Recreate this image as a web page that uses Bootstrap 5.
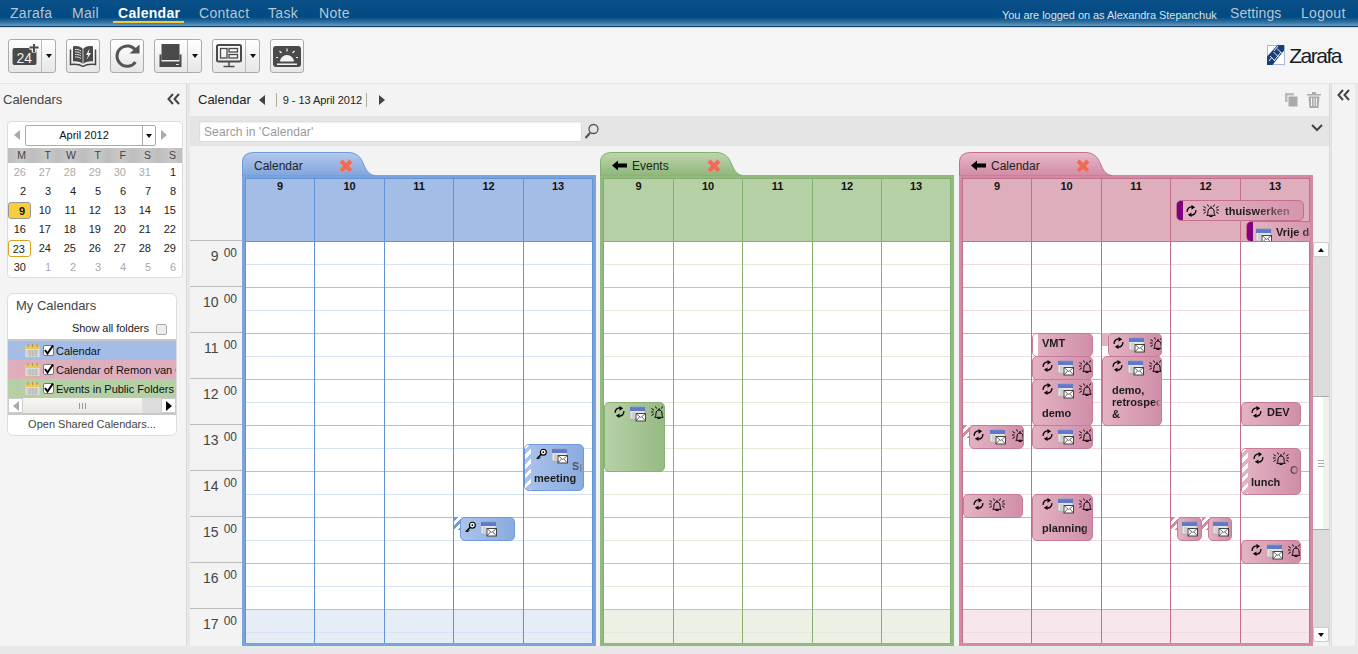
<!DOCTYPE html>
<html lang="en">
<head>
<meta charset="utf-8">
<title>Zarafa Calendar</title>
<link href="https://cdn.jsdelivr.net/npm/bootstrap@5.3.0/dist/css/bootstrap.min.css" rel="stylesheet">
<style>
html,body{height:654px;overflow:hidden}
body{font-family:"Liberation Sans",Arial,sans-serif;font-size:11px;line-height:12px;color:#222;background:#e8e8e8;width:1358px}
svg{display:block;flex:none}
.z-top{height:28px;background:linear-gradient(#0b5089 0,#014a82 17px,#2f70a0 22px,#6a9abd 26px,#0b3d66 26px,#0b3d66 27px,#dcdcdc 27px);color:#b9c7d3;font-size:14px;letter-spacing:.3px;position:relative}
.z-top a{color:#b9c7d3;text-decoration:none;position:absolute;top:5px;line-height:16px}
.z-top a.on{color:#fff;font-weight:700;letter-spacing:.3px}
.z-top .on::after{content:"";position:absolute;left:-5px;right:-4px;top:16px;height:2px;background:#f5c92f}
.z-top .z-set{letter-spacing:.1px}
.z-user{position:absolute;left:1002px;top:8px;font-size:11px;color:#d8e4ee;letter-spacing:-.05px;line-height:14px}
.z-bar{height:56px;background:#f5f5f5;padding:11px 8px 0;gap:10px;border-bottom:1px solid #e4e4e4}
.z-btn{height:34px;border:1px solid #ababab;border-radius:3px;background:linear-gradient(#fff,#e6e6e6);padding:0;display:flex;align-items:center;justify-content:center;width:34px}
.z-btn.z-wide{width:48px;justify-content:flex-start}
.z-main-ic{width:33px;height:32px;display:flex;align-items:center;justify-content:center;border-right:1px solid #bbb}
.z-drop{flex:1;display:flex;justify-content:center}
.z-caret{width:0;height:0;border:3.5px solid transparent;border-top:4px solid #111;border-bottom:0}
.z-logo{margin-left:auto;margin-right:9px;margin-top:6px;gap:4px}
.z-logo span{font-size:21px;letter-spacing:-1.5px;color:#151c26;line-height:22px}
.z-body{height:562px}
.z-left{width:186px;background:#f4f4f4;margin-right:4px;box-shadow:1px 0 0 #d8d8d8}
.z-lhead{height:37px;padding:9px 6px 0 3px;font-size:13px;color:#444;line-height:14px}
.mini{margin:0 0 0 7px;width:176px;height:157px;border:1px solid #ddd;border-radius:4px;background:#fff;overflow:hidden}
.mini-sel{height:26px;padding:3px 6px 0 6px}
.mini-box{width:131px;height:21px;margin:0 5px;border:1px solid #aaa;border-radius:2px;display:flex;font-size:11px;line-height:19px}
.mini-box b{flex:1;font-weight:400;text-align:center;color:#111}
.mini-box i{width:13px;border-left:1px solid #aaa;display:flex;align-items:center;justify-content:center}
.tri-l,.tri-r{width:0;height:0;border:5px solid transparent;border-left:0;border-right:6px solid #aaa}
.tri-r{border-right:0;border-left:6px solid #aaa}
.tri-m{margin-top:5px}
.tri-d{border-right-color:#444}.tri-e{border-left-color:#444}.tri-k{border-left-color:#000}
.mini-dow,.mini-days{display:grid;grid-template-columns:repeat(7,25px)}
.mini-dow{height:15px;background:repeating-linear-gradient(90deg,#bdbdbd 0,#c9c9c9 13px,#bdbdbd 25px);color:#444;line-height:15px;text-align:right;font-size:10.5px}
.mini-dow span{padding-right:7px}
.mini-days span{height:19px;line-height:18px;text-align:right;padding-right:7px;color:#222}
.mini-days .off{color:#aaa}
.mini-days .sel{margin-right:2px;padding-right:5px;height:17px;line-height:16px;margin-top:1px;background:#f8cd3e;border:1px solid #999;border-radius:3px;font-weight:700;color:#111}
.mini-days .now{margin-right:2px;padding-right:5px;height:17px;line-height:16px;margin-top:1px;border:1px solid #d9a520;border-radius:3px}
.mycal{margin:15px 0 0 7px;width:170px;height:143px;border:1px solid #ddd;border-radius:6px;background:#fff;overflow:hidden}
.mycal-t{font-size:13px;color:#444;padding:5px 0 0 8px;line-height:14px;height:24px}
.mycal-s{height:23px;border-bottom:2px solid #c8c8c8;padding-left:64px;gap:7px;align-items:flex-start;color:#222;line-height:14px;letter-spacing:-.05px}
.mycal-s span{padding-top:3px}
.mycal-s .form-check-input{width:11px;height:11px;margin:6px 0 0;background:#eee;border-color:#aaa;border-radius:2px}
.tree{height:19px;padding-left:9px;white-space:nowrap;overflow:hidden;line-height:18px;color:#111;align-items:center}
.tree-b{background:#a3bde6}.tree-p{background:#dfaebd}.tree-g{background:#b5d0a5}
.tree-d{width:8px;height:19px;flex:none;border-left:1px dotted #bbb;position:relative}
.tree-d::after{content:"";position:absolute;left:0;right:0;top:9px;border-top:1px dotted #bbb}
.tree-c{margin:0 2px 0 3px}
.hbar{height:15px;background:#f3f2ee}
.hbar i{display:flex;align-items:center;justify-content:center;width:15px;height:15px;background:#fff;border:1px solid #ccc;flex:none}
.hbar u{display:flex;flex:1;align-items:center;justify-content:center;background:linear-gradient(#f7f6f2,#e9e8e4)}
.hbar u::before{content:"";width:7px;height:6px;background:repeating-linear-gradient(90deg,#999 0 1px,transparent 1px 3px)}
.hbar s{display:block;width:19px;background:#dcdcdc}
.mycal-o{border-top:2px solid #c8c8c8;height:22px;text-align:center;line-height:19px;color:#444}
.z-main{width:1139px;background:#f3f3f3;box-shadow:1px 0 0 #d8d8d8;margin-right:3px;overflow:hidden}
.m-head{height:32px;padding:0 8px;font-size:13px;color:#222}
.m-range{font-size:11px;letter-spacing:-.05px;border-left:1px solid #b5aa96;border-right:1px solid #b5aa96;padding:0 4px 0 6px;height:14px;line-height:14px;margin:0 12px 0 11px}
.m-strip{height:30px;background:#e5e5e5;padding:5px 5px 0 9px}
.m-search{width:383px;height:21px;border:1px solid #ddd;border-radius:0;padding:0 4px;font-size:12px;font-family:inherit;line-height:18px;box-shadow:inset 0 1px 2px #eee}
.m-search::placeholder{color:#999;letter-spacing:.1px}
.m-glass{margin:2px 0 0 2px}
.m-down{margin:3px 1px 0 auto}
.times{width:52px;flex:none}
.times-top{height:95px;border-bottom:1px solid #bbb}
.t-row{height:46px;border-bottom:1px solid #bbb;padding-top:6px;padding-right:5px;color:#444;justify-content:flex-end;gap:5px}
.t-row span{font-size:14px;line-height:16px;margin-top:1px}
.t-row sup{font-size:12px;line-height:12px;top:0;vertical-align:top}
.fold{width:354px;flex:none;margin-right:4px}
.fold-2{margin-right:5px}
.fold-3{margin-right:0}
.fold-b{--line:#5f92d6;--frame:#7ba3dc;--head:#a3bde6;--hour:#a4c2ea;--half:#d6e2f5;--shade:#e6edf6}
.fold-2{--line:#84b06e;--frame:#93b981;--head:#b5d0a5;--hour:#b4d0a5;--half:#e2ebda;--shade:#edf0e4}
.fold-3{--line:#c56f8c;--frame:#d28aa5;--head:#dfaebd;--hour:#dfa7bc;--half:#eddce3;--shade:#f7e6ec}
.f-tabs{height:29px;padding-top:6px}
.f-tab{position:relative;height:23px;font-size:12px;color:#222;padding-left:12px;line-height:28px;gap:5px;z-index:1}
.f-tab>svg:first-child{position:absolute;left:0;top:0;z-index:-1}
.f-x{position:absolute;top:7px}
.f-frame{height:471px;border:3px solid var(--frame);background:#fff}
.f-grid{display:grid;grid-template-columns:69px 70px 69px 70px 70px}
.f-grid-2{grid-template-columns:70px 69px 70px 69px 70px}
.f-head{position:relative;height:64px;overflow:hidden;background:var(--head);border-top:1px solid var(--line);border-bottom:1px solid var(--line)}
.f-head>span{border-left:1px solid var(--line);text-align:center;font-weight:700;line-height:12px;color:#111;padding-top:1px}
.f-head>span:nth-child(5),.f-cols>div:last-child{border-right:1px solid var(--line)}
.f-cols{height:401px;overflow:hidden}
.f-cols>div{position:relative;border-left:1px solid var(--line);background-image:repeating-linear-gradient(to bottom,transparent 0 22px,var(--half) 22px 23px,transparent 23px 45px,var(--hour) 45px 46px),linear-gradient(to bottom,transparent 368px,var(--shade) 368px)}
.ev{position:absolute;left:0;width:61px;border:1px solid var(--line);border-radius:5px;overflow:hidden;background:var(--ev);font-size:11px;color:#1c1c1c}
.fold-b .ev{--ev:linear-gradient(90deg,#abc3eb,#89abdf);--line:#6e9cda}
.fold-2 .ev{--ev:linear-gradient(90deg,#b6d1a7,#97ba84);--line:#88b273}
.fold-3 .ev{--ev:linear-gradient(90deg,#e3b3c3,#d08ea8);--line:#c9799a}
.ev-ic{height:15px;display:flex;gap:5px;padding:3px 0 0 9px;white-space:nowrap;align-items:flex-start}
.ev-in{padding-left:4px;gap:5px}
.ev-sm{padding-left:3px;gap:6px}
.ev-t{font-weight:700;padding-left:9px;white-space:nowrap;line-height:12px;-webkit-mask-image:linear-gradient(to right,#000 calc(100% - 8px),transparent);mask-image:linear-gradient(to right,#000 calc(100% - 8px),transparent);overflow:hidden}
.ev-gap{margin-top:12px}
.ev-stub{height:12px;line-height:12px;font-weight:700;color:#555;white-space:nowrap;-webkit-mask-image:linear-gradient(to right,#000 calc(100% - 6px),transparent);mask-image:linear-gradient(to right,#000 calc(100% - 6px),transparent);overflow:hidden}
.ev-stub-a{padding-left:41px}
.ev-stub-b{padding-left:42px}
.ev-str{padding-left:6px}
.ev-str::before{content:"";position:absolute;left:0;top:0;bottom:0;width:6px;background:repeating-linear-gradient(135deg,#fff 0 3px,transparent 3px 7px)}
.ev-str .ev-ic{padding-left:5px}
.ev-str .ev-t{padding-left:3px}
.ev-free{padding-left:5px}
.ev-free::before{content:"";position:absolute;left:0;top:0;bottom:0;width:5px;background:#fff}
.ev-free .ev-t{padding:3px 0 0 4px}
.ev-dev{flex:1;padding:3px 0 0 5px}
.ev-flag{position:absolute;left:0;width:7px;height:13px;background:repeating-linear-gradient(135deg,var(--fl) 0 3px,#fff 3px 6px)}
.fold-b .ev-flag{--fl:#6e9cda}.fold-3 .ev-flag{--fl:#d28aa5}
.ev-flag.ev-solid{background:#e3b3c3}
.ev-h{position:absolute;height:21px;border:1px solid var(--line);border-radius:5px;background:linear-gradient(90deg,#e3b3c3,#d596ad);overflow:hidden;display:flex;align-items:center;padding-left:5px;font-weight:700;color:#1c1c1c;white-space:nowrap;gap:6px}
.ev-h::before{content:"";position:absolute;left:0;top:0;bottom:0;width:6px;background:#800080}
.ev-h em{font-style:normal;-webkit-mask-image:linear-gradient(to right,#000 45%,rgba(0,0,0,.35));mask-image:linear-gradient(to right,#000 45%,rgba(0,0,0,.35));letter-spacing:.05px}
.vbar{width:16px;flex:none;margin-top:96px;height:400px;background:#dcdcdc;display:flex;flex-direction:column}
.vbar i{display:flex;align-items:center;justify-content:center;height:15px;background:#fff;border:1px solid #ccc;border-radius:3px 3px 0 0}
.vbar i:last-child{border-radius:0 0 3px 3px;margin-top:auto}
.vbar .z-up{transform:rotate(180deg)}
.vbar u{display:flex;align-items:center;justify-content:center;margin-top:139px;height:134px;background:linear-gradient(90deg,#fff 0,#fff 65%,#f0f0ec 65%);border-top:1px solid #aaa;border-bottom:1px solid #aaa}
.vbar u::before{content:"";width:6px;height:7px;background:repeating-linear-gradient(180deg,#aaa 0 1px,transparent 1px 3px)}
.z-right{width:23px;background:#f3f3f3;padding:5px 0 0 5px;box-shadow:-1px 0 0 #dedede}
</style>
</head>
<body>
<svg width="0" height="0" class="position-absolute">
<defs>
<symbol id="i-rec" viewBox="0 0 12 13"><g fill="none" stroke="#000" stroke-width="1.5"><path d="M1.300 7.500A4.800 4.800 0 0 1 6.500 2"/><path d="M10.700 5.500A4.800 4.800 0 0 1 5.500 11"/></g><path d="M6 0l4 2.300L6 5zM6 8l-4 2.700L6 13z"/></symbol>
<symbol id="i-cal" viewBox="0 0 16 16"><rect x="0" y="1" width="15" height="12" fill="#e4e4e4" stroke="#aaa" stroke-width=".7"/><rect x="0" y="1" width="15" height="4" fill="#5f78cc"/><path d="M3 0v2M6 0v2M9 0v2M12 0v2" stroke="#8b97c8"/><path d="M2 7h3M2 9h3M2 11h3" stroke="#bbb"/><rect x="6" y="7.500" width="9.500" height="7.500" fill="#fff" stroke="#444"/><path d="M6 7.500l4.700 4 4.800-4M6 15l3.500-4M15.500 15l-3.500-4" fill="none" stroke="#444" stroke-width=".8"/></symbol>
<symbol id="i-bell" viewBox="0 0 16 13"><path d="M3.800 11.300c1.200-1.200 1-2.500 1.200-4.300.2-1.800 1.300-3 3-3s2.800 1.200 3 3c.2 1.800 0 3.100 1.200 4.300zM6.500 12.500h3M8 2v2" fill="none" stroke="#000" stroke-width="1"/><path d="M0 6h2.500M.5 2.500l2.400 1.600M.5 9.500l2.400-1.600M16 6h-2.500M15.500 2.500l-2.400 1.600M15.500 9.500l-2.400-1.600M4.500.5l1 2M11.500.5l-1 2" stroke="#000" stroke-width="1" fill="none"/></symbol>
<symbol id="i-key" viewBox="0 0 12 12"><circle cx="8" cy="4" r="3.200" fill="#fff" stroke="#000" stroke-width="1.300"/><circle cx="8" cy="4" r="1" fill="#000"/><path d="M5.500 6.500L.8 11.200M2.200 9.800l1.500 1.500M3.500 8.500l1.300 1.300" stroke="#000" stroke-width="1.300"/></symbol>
<symbol id="i-x" viewBox="0 0 14 14"><path d="M3.500 .3L7 3.800 10.500 .3 13.700 3.500 10.200 7l3.500 3.500-3.200 3.200L7 10.200l-3.500 3.500L.3 10.500 3.800 7 .3 3.500z" fill="#ef6a57" stroke="#e8a79b" stroke-width=".6"/></symbol>
<symbol id="i-back" viewBox="0 0 15 11"><path d="M0 5.500L6 .5V3.500h9v4H6v3z" fill="#000"/></symbol>
<symbol id="i-folder" viewBox="0 0 15 14"><rect x="0" y="1.500" width="15" height="12" fill="#ddd" stroke="#c9b36a" stroke-width=".6"/><rect x="0" y="1.500" width="15" height="3.500" fill="#eac860"/><path d="M3 0v3M7.500 0v3M12 0v3" stroke="#b8952c"/><path d="M2 7h11M2 9h11M2 11h11M5 6v7M8 6v7M11 6v7" stroke="#a9a9a9" stroke-width=".7"/></symbol>
<symbol id="i-check" viewBox="0 0 11 11"><rect x=".5" y=".5" width="10" height="10" rx="1.500" fill="#fff" stroke="#777"/><path d="M2 5l2.500 3.500L10 .5" fill="none" stroke="#000" stroke-width="2"/></symbol>
</defs>
</svg>

<nav class="z-top">
<a href="#" style="left:10px">Zarafa</a><a href="#" style="left:72px">Mail</a><a href="#" class="on" style="left:118px">Calendar</a><a href="#" style="left:199px">Contact</a><a href="#" style="left:268px">Task</a><a href="#" style="left:319px">Note</a>
<span class="z-user">You are logged on as Alexandra Stepanchuk</span>
<a href="#" class="z-set" style="left:1230px">Settings</a><a href="#" style="left:1301px">Logout</a>
</nav>

<div class="z-bar d-flex">
<button class="z-btn z-wide" type="button"><span class="z-main-ic"><svg width="28" height="24" viewBox="0 0 28 24"><rect x="1.500" y="4" width="24" height="17" rx="2" fill="#4a4a4a"/><text x="5.500" y="18.500" fill="#f2f2f2" font-size="14" font-family="Liberation Sans">24</text><path d="M23 -1v9.500M18.300 3.500h9.500" stroke="#f5f5f5" stroke-width="4.500"/><path d="M23 -1v9M18.500 3.500h9" stroke="#4a4a4a" stroke-width="2"/></svg></span><span class="z-drop"><span class="z-caret"></span></span></button>
<button class="z-btn" type="button"><svg width="28" height="22" viewBox="0 0 28 22"><path d="M1.500 4.500V19.500c4-.5 9-.5 12.500 2 3.500-2.500 8.500-2.500 12.500-2V4.500" fill="none" stroke="#444" stroke-width="1.500"/><path d="M4 1.500c4-1 7.500 0 10 2.500v15c-2.500-2-6-3-10-2.500z" fill="#4a4a4a"/><path d="M24 1.500c-4-1-7.500 0-10 2.500v15c2.500-2 6-3 10-2.500z" fill="#4a4a4a"/><path d="M6 4.500c2-.3 4.500.3 6 1.500M6 7c2-.3 4.500.3 6 1.500M6 9.500c2-.3 4.500.3 6 1.500M6 12c2-.3 4.500.3 6 1.500" stroke="#e6e6e6" stroke-width="1" fill="none"/><path d="M20.500 3.500l-3.500 6.500h2.300l-1.800 5 4.500-7h-2.300z" fill="#f2f2f2"/><path d="M14 4v15" stroke="#f2f2f2" stroke-width=".8"/></svg></button>
<button class="z-btn" type="button"><svg width="26" height="26" viewBox="0 0 26 26" fill="none"><path d="M21.500 19a10.200 10.200 0 1 1 .5-11" stroke="#555" stroke-width="3"/><path d="M15.500 10.500H25.500V1.500z" fill="#555"/></svg></button>
<button class="z-btn z-wide" type="button"><span class="z-main-ic"><svg width="24" height="24" viewBox="0 0 24 24"><rect x="2.500" y="0" width="18" height="16" fill="#4a4a4a"/><path d="M.5 10.500H2.500V17.500H20.500V10.500H22.500V23H.5z" fill="#4a4a4a"/><path d="M17 20.500h3" stroke="#ddd"/></svg></span><span class="z-drop"><span class="z-caret"></span></span></button>
<button class="z-btn z-wide" type="button"><span class="z-main-ic"><svg width="26" height="24" viewBox="0 0 26 24" fill="none" stroke="#4a4a4a"><rect x="1" y="1" width="24" height="16.500" rx="1.500" stroke-width="2"/><rect x="4.500" y="4.500" width="6.500" height="9.500" stroke-width="1.300"/><rect x="13" y="4.500" width="8.500" height="3.500" stroke-width="1.300"/><rect x="13" y="10.500" width="8.500" height="3.500" stroke-width="1.300"/><path d="M13 18v4M7.500 22.500h11" stroke-width="1.500"/></svg></span><span class="z-drop"><span class="z-caret"></span></span></button>
<button class="z-btn" type="button"><svg width="28" height="21" viewBox="0 0 28 21"><rect width="28" height="21" rx="3" fill="#4a4a4a"/><path d="M7 15.500a7 6.500 0 0 1 14 0zM4 17.500h20v1.500H4z" fill="#f2f2f2"/><path d="M14 2.500v3M6.500 5l2 2M21.500 5l-2 2M3 11.500h2M23 11.500h2" stroke="#f2f2f2" stroke-width="1.200"/></svg></button>
<div class="z-logo d-flex align-items-start">
<svg width="18" height="20" viewBox="0 0 18 20"><rect x=".5" y=".5" width="17" height="19" fill="#fff" stroke="#a9bad3"/><path d="M0 20V11.500L10.500 0H17V5.500L5.500 20z" fill="#173f7e"/><path d="M3 11l5 5M6.500 7l5 5M10 3.500l5 5M2 16l3-4M7 16l7-9M7 6l4-5" stroke="#fff" stroke-width=".9"/></svg>
<span>Zarafa</span>
</div>
</div>

<div class="z-body d-flex">
<aside class="z-left flex-none">
<div class="z-lhead d-flex justify-content-between"><span>Calendars</span><svg width="13" height="12" viewBox="0 0 13 12" fill="none" stroke="#444" stroke-width="2"><path d="M6 1L1.500 6 6 11M12 1L7.500 6 12 11"/></svg></div>
<div class="card mini">
<div class="mini-sel d-flex align-items-start"><span class="tri-l tri-m"></span><div class="mini-box"><b>April 2012</b><i><span class="z-caret"></span></i></div><span class="tri-r tri-m"></span></div>
<div class="mini-dow"><span>M</span><span>T</span><span>W</span><span>T</span><span>F</span><span>S</span><span>S</span></div>
<div class="mini-days">
<span class="off">26</span><span class="off">27</span><span class="off">28</span><span class="off">29</span><span class="off">30</span><span class="off">31</span><span>1</span>
<span>2</span><span>3</span><span>4</span><span>5</span><span>6</span><span>7</span><span>8</span>
<span class="sel">9</span><span>10</span><span>11</span><span>12</span><span>13</span><span>14</span><span>15</span>
<span>16</span><span>17</span><span>18</span><span>19</span><span>20</span><span>21</span><span>22</span>
<span class="now">23</span><span>24</span><span>25</span><span>26</span><span>27</span><span>28</span><span>29</span>
<span>30</span><span class="off">1</span><span class="off">2</span><span class="off">3</span><span class="off">4</span><span class="off">5</span><span class="off">6</span>
</div>
</div>
<div class="card mycal">
<div class="mycal-t">My Calendars</div>
<div class="mycal-s d-flex"><span>Show all folders</span><input class="form-check-input" type="checkbox" aria-label="Show all folders"></div>
<div class="tree tree-b d-flex"><span class="tree-d"></span><svg width="15" height="14"><use href="#i-folder"/></svg><svg class="tree-c" width="11" height="11"><use href="#i-check"/></svg><span>Calendar</span></div>
<div class="tree tree-p d-flex"><span class="tree-d"></span><svg width="15" height="14"><use href="#i-folder"/></svg><svg class="tree-c" width="11" height="11"><use href="#i-check"/></svg><span>Calendar of Remon van Gent</span></div>
<div class="tree tree-g d-flex"><span class="tree-d"></span><svg width="15" height="14"><use href="#i-folder"/></svg><svg class="tree-c" width="11" height="11"><use href="#i-check"/></svg><span>Events in Public Folders</span></div>
<div class="hbar d-flex"><i><span class="tri-l"></span></i><u></u><s></s><i><span class="tri-r tri-k"></span></i></div>
<div class="mycal-o">Open Shared Calendars...</div>
</div>
</aside>

<main class="z-main">
<div class="m-head d-flex align-items-center">
<span class="me-2">Calendar</span><span class="tri-l tri-d"></span><span class="m-range">9 - 13 April 2012</span><span class="tri-r tri-e"></span>
<svg class="ms-auto me-2" width="14" height="14" viewBox="0 0 14 14" fill="#aaa"><rect x="0" y="0" width="9" height="9" fill="#bbb"/><rect x="3" y="3" width="10" height="11" stroke="#f3f3f3"/></svg>
<svg width="14" height="16" viewBox="0 0 14 16" fill="#aaa"><path d="M0 2h14v1.500H0zM5 0h4v2H5zM1.500 4.500h11L11.500 16h-9zM4 6v8h1V6zM6.500 6v8h1V6zM9 6v8h1V6z" fill-rule="evenodd"/></svg>
</div>
<div class="m-strip d-flex">
<input class="form-control m-search" type="text" placeholder="Search in 'Calendar'">
<svg class="m-glass" width="15" height="17" viewBox="0 0 15 17" fill="none" stroke="#555"><circle cx="9.500" cy="6" r="4.500" stroke-width="1.300"/><path d="M6 10L1.500 15" stroke-width="2.200"/></svg>
<svg class="m-down" width="12" height="8" viewBox="0 0 12 8" fill="none" stroke="#444" stroke-width="2"><path d="M1 1l5 5 5-5"/></svg>
</div>
<div class="d-flex">
<div class="times">
<div class="times-top"></div>
<div class="t-row d-flex"><span>9</span><sup>00</sup></div>
<div class="t-row d-flex"><span>10</span><sup>00</sup></div>
<div class="t-row d-flex"><span>11</span><sup>00</sup></div>
<div class="t-row d-flex"><span>12</span><sup>00</sup></div>
<div class="t-row d-flex"><span>13</span><sup>00</sup></div>
<div class="t-row d-flex"><span>14</span><sup>00</sup></div>
<div class="t-row d-flex"><span>15</span><sup>00</sup></div>
<div class="t-row d-flex"><span>16</span><sup>00</sup></div>
<div class="t-row d-flex"><span>17</span><sup>00</sup></div>
</div>

<section class="fold fold-b">
<div class="f-tabs"><div class="f-tab d-flex"><svg width="133" height="24" viewBox="0 0 133 24"><defs><linearGradient id="gb" x1="0" y1="0" x2="0" y2="1"><stop offset="0" stop-color="#b4c9ec"/><stop offset="1" stop-color="#7fa5dd"/></linearGradient></defs><path d="M.5 24V10Q.5 .5 12 .5H106C116 .5 119 6 122 13C125 20 128 23 133 23.500V24z" fill="url(#gb)" stroke="#6f9bd8"/></svg><span>Calendar</span><svg class="f-x" style="left:97px" width="14" height="14"><use href="#i-x"/></svg></div></div>
<div class="f-frame">
<div class="f-grid f-head"><span>9</span><span>10</span><span>11</span><span>12</span><span>13</span></div>
<div class="f-grid f-cols">
<div></div><div></div><div></div>
<div><span class="ev-flag" style="top:275px"></span><div class="ev" style="left:6px;width:55px;top:275px;height:24px"><div class="ev-ic ev-in"><svg width="11" height="12"><use href="#i-key"/></svg><svg width="16" height="16"><use href="#i-cal"/></svg></div></div></div>
<div><div class="ev ev-str" style="top:202px;width:60px;height:47px"><div class="ev-ic"><svg width="11" height="12"><use href="#i-key"/></svg><svg width="16" height="16"><use href="#i-cal"/></svg></div><div class="ev-stub ev-stub-a">Sprint</div><div class="ev-t">meeting</div></div></div>
</div>
</div>
</section>

<section class="fold fold-2">
<div class="f-tabs"><div class="f-tab d-flex"><svg width="143" height="24" viewBox="0 0 143 24"><defs><linearGradient id="gg" x1="0" y1="0" x2="0" y2="1"><stop offset="0" stop-color="#bdd6ae"/><stop offset="1" stop-color="#8fb67a"/></linearGradient></defs><path d="M.5 24V10Q.5 .5 12 .5H116C126 .5 129 6 132 13C135 20 138 23 143 23.500V24z" fill="url(#gg)" stroke="#84b06e"/></svg><svg class="mt-2" width="15" height="11"><use href="#i-back"/></svg><span>Events</span><svg class="f-x" style="left:107px" width="14" height="14"><use href="#i-x"/></svg></div></div>
<div class="f-frame">
<div class="f-grid f-grid-2 f-head"><span>9</span><span>10</span><span>11</span><span>12</span><span>13</span></div>
<div class="f-grid f-grid-2 f-cols">
<div><div class="ev" style="top:160px;height:70px"><div class="ev-ic"><svg width="11" height="12"><use href="#i-rec"/></svg><svg width="16" height="16"><use href="#i-cal"/></svg><svg width="16" height="13"><use href="#i-bell"/></svg></div></div></div>
<div></div><div></div><div></div><div></div>
</div>
</div>
</section>

<section class="fold fold-3">
<div class="f-tabs"><div class="f-tab d-flex"><svg width="153" height="24" viewBox="0 0 153 24"><defs><linearGradient id="gp" x1="0" y1="0" x2="0" y2="1"><stop offset="0" stop-color="#e8b9c9"/><stop offset="1" stop-color="#d28aa5"/></linearGradient></defs><path d="M.5 24V10Q.5 .5 12 .5H126C136 .5 139 6 142 13C145 20 148 23 153 23.500V24z" fill="url(#gp)" stroke="#c56f8c"/></svg><svg class="mt-2" width="15" height="11"><use href="#i-back"/></svg><span>Calendar</span><svg class="f-x" style="left:117px" width="14" height="14"><use href="#i-x"/></svg></div></div>
<div class="f-frame">
<div class="f-grid f-head"><span>9</span><span>10</span><span>11</span><span>12</span><span>13</span>
<div class="ev-h" style="left:214px;top:21px;width:128px"><svg class="ms-1" width="11" height="12"><use href="#i-rec"/></svg><svg width="16" height="13"><use href="#i-bell"/></svg><em>thuiswerken</em></div>
<div class="ev-h gap-1" style="left:284px;top:42px;width:70px"><svg class="ms-1 mt-2" width="16" height="16"><use href="#i-cal"/></svg><em>Vrije dag</em></div>
</div>
<div class="f-grid f-cols">
<div>
<span class="ev-flag" style="top:183px"></span><div class="ev" style="left:6px;width:55px;top:183px;height:24px"><div class="ev-ic ev-sm"><svg width="11" height="12"><use href="#i-rec"/></svg><svg width="16" height="16"><use href="#i-cal"/></svg><svg width="16" height="13"><use href="#i-bell"/></svg></div></div>
<div class="ev" style="top:252px;width:60px;height:24px"><div class="ev-ic"><svg width="11" height="12"><use href="#i-rec"/></svg><svg width="16" height="13"><use href="#i-bell"/></svg></div></div>
</div>
<div>
<div class="ev ev-free" style="top:91px;height:24px"><div class="ev-t">VMT</div></div>
<div class="ev" style="top:114px;height:24px"><div class="ev-ic"><svg width="11" height="12"><use href="#i-rec"/></svg><svg width="16" height="16"><use href="#i-cal"/></svg><svg width="16" height="13"><use href="#i-bell"/></svg></div></div>
<div class="ev" style="top:137px;height:47px"><div class="ev-ic"><svg width="11" height="12"><use href="#i-rec"/></svg><svg width="16" height="16"><use href="#i-cal"/></svg><svg width="16" height="13"><use href="#i-bell"/></svg></div><div class="ev-t ev-gap">demo</div></div>
<div class="ev" style="top:183px;height:24px"><div class="ev-ic"><svg width="11" height="12"><use href="#i-rec"/></svg><svg width="16" height="16"><use href="#i-cal"/></svg><svg width="16" height="13"><use href="#i-bell"/></svg></div></div>
<div class="ev" style="top:252px;height:47px"><div class="ev-ic"><svg width="11" height="12"><use href="#i-rec"/></svg><svg width="16" height="16"><use href="#i-cal"/></svg><svg width="16" height="13"><use href="#i-bell"/></svg></div><div class="ev-t ev-gap">planning</div></div>
</div>
<div>
<span class="ev-flag ev-solid" style="top:91px"></span><div class="ev" style="left:6px;width:54px;top:91px;height:24px"><div class="ev-ic ev-in"><svg width="11" height="12"><use href="#i-rec"/></svg><svg width="16" height="16"><use href="#i-cal"/></svg><svg width="16" height="13"><use href="#i-bell"/></svg></div></div>
<div class="ev" style="top:114px;width:60px;height:70px"><div class="ev-ic"><svg width="11" height="12"><use href="#i-rec"/></svg><svg width="16" height="16"><use href="#i-cal"/></svg><svg width="16" height="13"><use href="#i-bell"/></svg></div><div class="ev-t ev-gap">demo,<br>retrospective<br>&amp;</div></div>
</div>
<div>
<span class="ev-flag" style="top:275px"></span><div class="ev" style="left:6px;width:25px;top:275px;height:24px"><div class="ev-ic ev-in"><svg width="16" height="16"><use href="#i-cal"/></svg></div></div>
<span class="ev-flag" style="top:275px;left:31px"></span><div class="ev" style="left:37px;width:24px;top:275px;height:24px"><div class="ev-ic ev-in"><svg width="16" height="16"><use href="#i-cal"/></svg></div></div>
</div>
<div>
<div class="ev d-flex" style="top:160px;width:60px;height:24px"><div class="ev-ic"><svg width="11" height="12"><use href="#i-rec"/></svg></div><div class="ev-t ev-dev">DEV</div></div>
<div class="ev ev-str" style="top:206px;width:60px;height:47px"><div class="ev-ic"><svg width="11" height="12"><use href="#i-rec"/></svg><svg class="ms-1" width="16" height="13"><use href="#i-bell"/></svg></div><div class="ev-stub ev-stub-b">Overleg</div><div class="ev-t">lunch</div></div>
<div class="ev" style="top:298px;width:60px;height:24px"><div class="ev-ic"><svg width="11" height="12"><use href="#i-rec"/></svg><svg width="16" height="16"><use href="#i-cal"/></svg><svg width="16" height="13"><use href="#i-bell"/></svg></div></div>
</div>
</div>
</div>
</section>

<div class="vbar"><i><span class="z-caret z-up"></span></i><u></u><i><span class="z-caret"></span></i></div>
</div>
</main>

<aside class="z-right flex-none"><svg width="13" height="12" viewBox="0 0 13 12" fill="none" stroke="#444" stroke-width="2"><path d="M6 1L1.500 6 6 11M12 1L7.500 6 12 11"/></svg></aside>
</div>
<script src="https://cdn.jsdelivr.net/npm/bootstrap@5.3.0/dist/js/bootstrap.bundle.min.js"></script>
</body>
</html>
